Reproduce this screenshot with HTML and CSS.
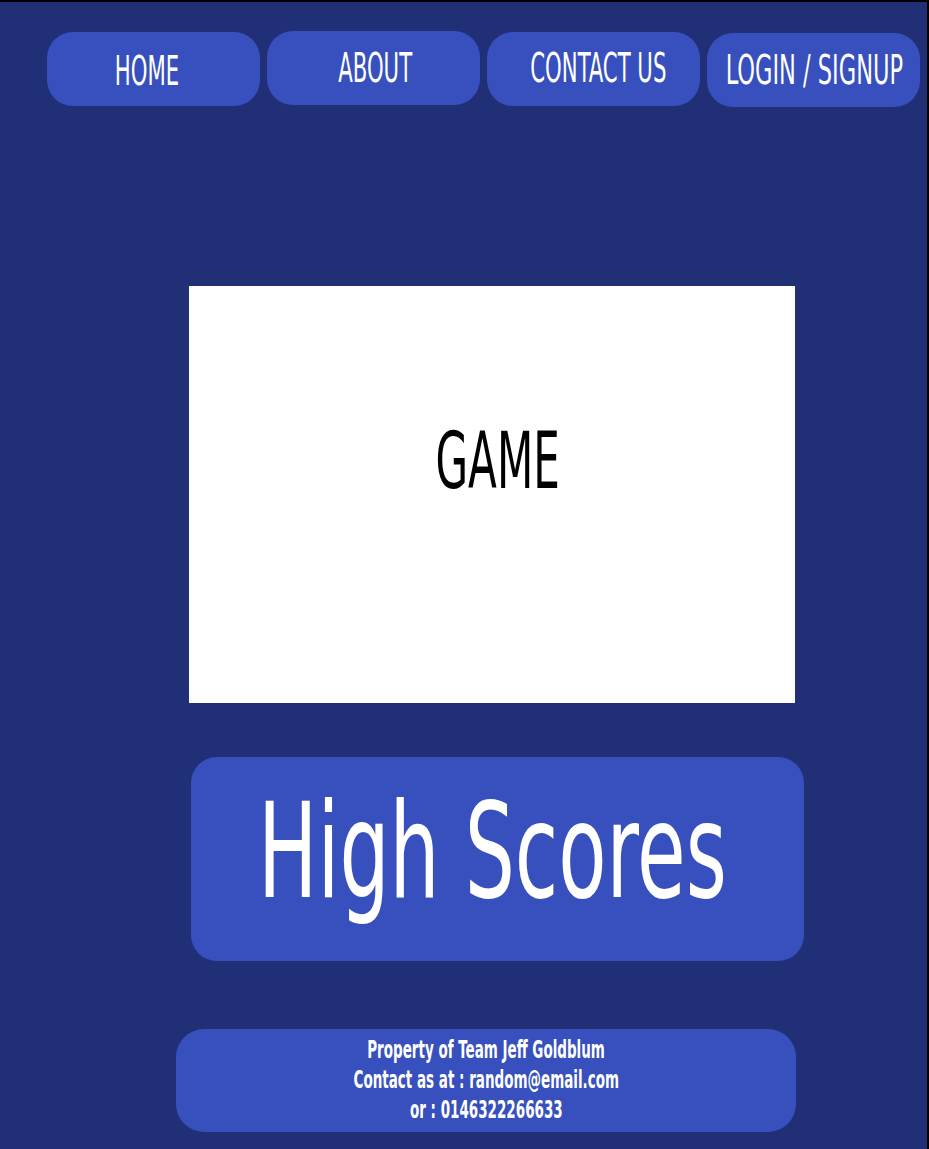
FILE: index.html
```html
<!DOCTYPE html>
<html>
<head>
<meta charset="utf-8">
<link rel="stylesheet" href="styles.css">
</head>
<body>
<div class="page">
  <nav class="nav">
    <a class="nav-btn home"><span class="t">HOME</span></a>
    <a class="nav-btn about"><span class="t">ABOUT</span></a>
    <a class="nav-btn contact"><span class="t">CONTACT US</span></a>
    <a class="nav-btn login"><span class="t">LOGIN / SIGNUP</span></a>
  </nav>
  <section class="game">
    <span class="t game-text">GAME</span>
  </section>
  <section class="scores">
    <span class="t scores-text">High Scores</span>
  </section>
  <footer class="footer">
    <div class="line"><span class="t">Property of Team Jeff Goldblum</span></div>
    <div class="line"><span class="t">Contact as at : random@email.com</span></div>
    <div class="line"><span class="t">or : 0146322266633</span></div>
  </footer>
</div>
</body>
</html>
```

FILE: styles.css
```css
html, body {
  margin: 0;
  padding: 0;
  background: #213076;
}
body {
  font-family: "DejaVu Sans", sans-serif;
  font-stretch: condensed;
  color: #ffffff;
}
.page {
  box-sizing: border-box;
  width: 929px;
  height: 1149px;
  border-top: 2px solid #000;
  border-right: 2px solid #000;
  background: #213076;
  overflow: hidden;
}
.t {
  display: inline-block;
  transform: scaleX(0.6);
  white-space: nowrap;
}
.nav {
  display: flex;
  gap: 7px;
  padding: 30px 0 0 47px;
}
.nav-btn {
  box-sizing: border-box;
  width: 213px;
  height: 74px;
  border-radius: 26px;
  background: #3750bd;
  display: flex;
  align-items: center;
  justify-content: center;
  font-size: 41px;
  line-height: 1;
}
.nav-btn .t { transform: scaleX(0.575); }
.nav-btn.home { padding: 4px 14px 0 0; }
.nav-btn.about { margin-top: -1px; padding-left: 4px; }
.nav-btn.contact { padding: 0 0 2px 10px; }
.nav-btn.login { margin-top: 1px; padding-left: 2px; }
.nav-btn.login .t { transform: scaleX(0.61); }
.game {
  margin: 179px 0 0 189px;
  width: 606px;
  height: 417px;
  background: #ffffff;
  color: #000;
  display: flex;
  justify-content: center;
  padding: 136px 0 0 12px;
  box-sizing: border-box;
}
.game-text {
  font-size: 78px;
  line-height: 1;
  transform: scaleX(0.6) !important;
}
.scores {
  margin: 54px 0 0 191px;
  width: 613px;
  height: 204px;
  border-radius: 26px;
  background: #3750bd;
  display: flex;
  justify-content: center;
  align-items: center;
  padding: 0 10px 16px 0;
  box-sizing: border-box;
}
.scores-text {
  font-size: 132px;
  line-height: 1;
  transform: scaleX(0.665) !important;
}
.footer {
  margin: 68px 0 0 176px;
  width: 620px;
  height: 103px;
  border-radius: 28px;
  background: #3750bd;
  display: flex;
  flex-direction: column;
  align-items: center;
  padding-top: 6px;
  box-sizing: border-box;
  font-size: 25px;
  font-weight: bold;
  line-height: 30px;
}
.footer .t { transform: scaleX(0.6); }
```
